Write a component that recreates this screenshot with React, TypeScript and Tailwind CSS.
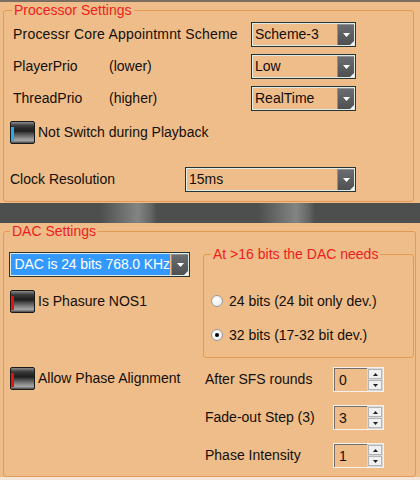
import type { ReactNode } from "react";

const Arrow = () => (
  <svg width="7" height="4" viewBox="0 0 7 4">
    <path d="M0 0h7L3.5 4z" fill="#fff" />
  </svg>
);

const Combo = ({ value, width, selected = false }: { value: string; width: string; selected?: boolean }) => (
  <div className={`flex h-[25px] ${width} border border-[#263434] bg-[#EEBD8A] shadow-[inset_0_0_0_1px_#dfece6]`}>
    <div className="flex-1 flex min-w-0 p-[1px]">
      <div
        className={`flex-1 flex items-center overflow-hidden whitespace-nowrap ${
          selected ? "justify-end bg-[#3399FF] text-white tracking-[-0.1px]" : "pl-[2px]"
        }`}
      >
        {value}
      </div>
    </div>
    <div className="relative w-[17px] my-[1px] mr-[1px] flex items-center justify-center bg-[linear-gradient(to_bottom,#6a6c70,#4e5054)] border-l border-t border-[#8d9094]">
      <Arrow />
      <svg className="absolute right-0 bottom-0" width="4" height="4" viewBox="0 0 4 4">
        <path d="M4 0v4H0z" fill="#f2f2f2" />
      </svg>
    </div>
  </div>
);

const Toggle = ({ color }: { color: string }) => (
  <div className="w-[25px] h-[23px] shrink-0 flex flex-col rounded-[2px] border border-[#1a1a1a] overflow-hidden bg-[linear-gradient(to_bottom,#8a8a8a_0%,#3a3a3a_18%,#1d1d1d_42%,#4a4a4a_55%,#8e8e8e_78%,#a4a4a4_88%,#4a4a4a_100%)]">
    <div className={`w-[3px] h-[14px] mt-[5px] ${color}`} />
  </div>
);

const Radio = ({ checked = false }: { checked?: boolean }) => (
  <div className="w-[12px] h-[12px] rounded-full border border-[#9a9a9a] bg-[radial-gradient(circle_at_35%_35%,#ffffff,#e6e6e6)] flex items-center justify-center">
    {checked && <div className="w-[4px] h-[4px] rounded-full bg-black" />}
  </div>
);

const Spinner = ({ value }: { value: string }) => (
  <div className="flex w-[51px] h-[25px] border border-[#f6f1ec]">
    <div className="flex-1 flex items-center pl-[4px] border-l border-t border-[#6e6e6e] bg-[#EEBD8A]">{value}</div>
    <div className="w-[16px] flex flex-col gap-[1px] bg-[#d8d8d8] p-[1px]">
      {["M0 3h5L2.5 0z", "M0 0h5L2.5 3z"].map((d) => (
        <div key={d} className="flex-1 flex items-center justify-center bg-[#f0f0f0] border border-[#b4b4b4]">
          <svg width="5" height="3" viewBox="0 0 5 3">
            <path d={d} fill="#222" />
          </svg>
        </div>
      ))}
    </div>
  </div>
);

const Legend = ({ children, ml }: { children: ReactNode; ml: string }) => (
  <legend className={`${ml} px-[2px] leading-[17px] text-[#EE1C1C]`}>{children}</legend>
);

export default function App() {
  return (
    <div className="w-[420px] h-[480px] overflow-hidden flex flex-col bg-[#EEBD8A] text-[14px] leading-[17px] text-[#140f0b] font-['Liberation_Sans',Arial,sans-serif]">
      <div className="h-[2px] bg-[#7a6e62]" />

      {/* Processor Settings */}
      <fieldset className="ml-[3px] w-[411px] min-w-0 p-0 border border-[#E39A52] rounded-[3px]">
        <Legend ml="ml-[8px]">Processor Settings</Legend>
        <div className="pl-[6px] pt-[3px] pb-[9px] flex flex-col">
          <div className="flex items-center h-[25px]">
            <span className="ml-[3px] w-[238px] tracking-[0.2px]">Processr Core Appointmnt Scheme</span>
            <Combo value="Scheme-3" width="w-[105px]" />
          </div>
          <div className="flex items-center h-[25px] mt-[7px]">
            <span className="ml-[3px] w-[96px]">PlayerPrio</span>
            <span className="w-[142px]">(lower)</span>
            <Combo value="Low" width="w-[105px]" />
          </div>
          <div className="flex items-center h-[25px] mt-[7px]">
            <span className="ml-[3px] w-[96px]">ThreadPrio</span>
            <span className="w-[142px]">(higher)</span>
            <Combo value="RealTime" width="w-[105px]" />
          </div>
          <div className="flex items-center h-[24px] mt-[9px]">
            <Toggle color="bg-[#2aa8ea]" />
            <span className="ml-[3px]">Not Switch during Playback</span>
          </div>
          <div className="flex items-center h-[25px] mt-[23px]">
            <span className="w-[175px]">Clock Resolution</span>
            <Combo value="15ms" width="w-[171px]" />
          </div>
        </div>
      </fieldset>

      <div className="mt-[1px] h-[20px] shrink-0 bg-[linear-gradient(to_right,#4d4f4e_0px,#4d4f4e_100px,#828583_138px,#666867_150px,#4d4f4e_157px,#4d4f4e_258px,#828583_296px,#666867_308px,#4d4f4e_315px,#4d4f4e_100%)]" />

      {/* DAC Settings */}
      <fieldset className="ml-[3px] w-[413px] min-w-0 p-0 border border-[#E39A52] rounded-[3px]">
        <Legend ml="ml-[6px]">DAC Settings</Legend>
        <div className="pl-[5px] pt-[6px] pb-[8px]">
          <div className="flex items-start">
            <div className="w-[181px] mt-[6px] flex flex-col">
              <Combo value="DAC is 24 bits 768.0 KHz" width="w-[181px]" selected />
              <div className="flex items-center mt-[13px] ml-[1px] h-[23px]">
                <Toggle color="bg-[#e01414]" />
                <span className="ml-[3px]">Is Phasure NOS1</span>
              </div>
            </div>
            <fieldset className="ml-[13px] w-[211px] min-w-0 p-0 border border-[#E39A52] rounded-[3px]">
              <Legend ml="ml-[7px]">At &gt;16 bits the DAC needs</Legend>
              <div className="pl-[7px] pb-[12px]">
                <div className="flex items-center h-[20px] mt-[28px]">
                  <Radio />
                  <span className="ml-[6px]">24 bits (24 bit only dev.)</span>
                </div>
                <div className="flex items-center h-[20px] mt-[14px]">
                  <Radio checked />
                  <span className="ml-[6px]">32 bits (17-32 bit dev.)</span>
                </div>
              </div>
            </fieldset>
          </div>

          <div className="flex items-start">
            <div className="w-[195px] flex items-center mt-[9px] ml-[1px] h-[23px]">
              <Toggle color="bg-[#e01414]" />
              <span className="ml-[3px]">Allow Phase Alignment</span>
            </div>
            <div className="flex flex-col">
              {[
                ["After SFS rounds", "0", "mt-[9px]"],
                ["Fade-out Step (3)", "3", "mt-[13px]"],
                ["Phase Intensity", "1", "mt-[13px]"],
              ].map(([label, val, mt]) => (
                <div key={label} className={`flex items-center h-[25px] ${mt}`}>
                  <span className="w-[128px]">{label}</span>
                  <Spinner value={val} />
                </div>
              ))}
            </div>
          </div>
        </div>
      </fieldset>

      <div className="flex-1 bg-[#f3e6d8]" />
    </div>
  );
}
